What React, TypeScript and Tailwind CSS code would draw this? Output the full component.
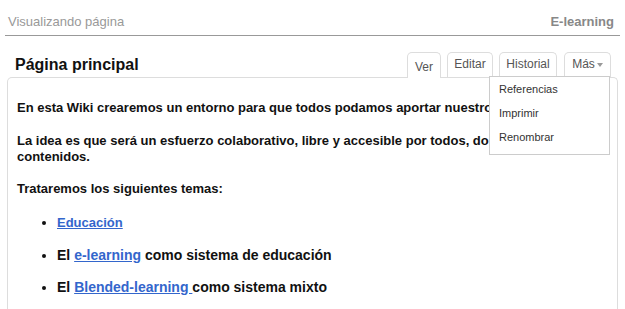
import React from 'react';

const tabs = [
  { label: 'Ver', width: 'w-[34px]', active: true },
  { label: 'Editar', width: 'w-[46px]', active: false },
  { label: 'Historial', width: 'w-[58px]', active: false },
];

const menuItems = ['Referencias', 'Imprimir', 'Renombrar'];

export default function App() {
  return (
    <div className="w-[625px] h-[309px] overflow-hidden bg-white font-['Liberation_Sans',Arial,sans-serif]">
      {/* page header */}
      <div className="mx-[5px] mt-[14px] flex items-center justify-between border-b border-[#999] pb-[5px] pl-[3px] pr-[6px] text-[13px] leading-[16px]">
        <span className="text-[#999]">Visualizando página</span>
        <span className="font-bold text-[#888]">E-learning</span>
      </div>

      {/* title + tabs */}
      <div className="mt-[16px] flex h-[25px] items-start justify-between">
        <h2 className="ml-[15px] mt-[3px] text-[16px] font-bold leading-[20px] text-[#111]">Página principal</h2>
        <ul className="mr-[14px] flex items-start gap-[6px] text-[12px] leading-[14px] text-[#555]">
          {tabs.map(t =>
            t.active ? (
              <li
                key={t.label}
                className={`relative z-10 h-[26px] ${t.width} rounded-t-[5px] border border-b-0 border-[#ddd] bg-white pt-[7px] text-center`}
              >
                {t.label}
              </li>
            ) : (
              <li
                key={t.label}
                className={`h-[25px] ${t.width} rounded-t-[5px] border border-b-0 border-[#ddd] bg-white pt-[4px] text-center`}
              >
                {t.label}
              </li>
            )
          )}
          <li className="relative ml-[1px] h-[25px] w-[47px] rounded-t-[5px] border border-b-0 border-[#ddd] bg-white pt-[4px] text-center">
            Más
            <span className="ml-[2px] inline-block h-0 w-0 border-x-[3px] border-t-[4px] border-x-transparent border-t-[#999] align-middle" />
            <div className="absolute right-0 top-[23px] z-20 w-[121px] border border-[#ccc] bg-white pb-[5px] text-left text-[11px] leading-[24px] text-[#333]">
              {menuItems.map(m => (
                <div key={m} className="pl-[9px]">{m}</div>
              ))}
            </div>
          </li>
        </ul>
      </div>

      {/* content panel */}
      <div className="ml-[7px] h-[240px] w-[611px] overflow-hidden rounded-t-[5px] border border-b-0 border-[#ddd] pl-[9px] pt-[22px] text-[13px] font-bold leading-[16px] text-[#111]">
        <p className="whitespace-nowrap">
          En esta Wiki crearemos un entorno para que todos podamos aportar nuestros conocimientos.
        </p>
        <p className="mt-[17px]">
          La idea es que será un esfuerzo colaborativo, libre y accesible por todos, donde compartir
          <br />
          contenidos.
        </p>
        <p className="mt-[16px]">Trataremos los siguientes temas:</p>
        <ul className="mt-[18px] list-disc pl-[40px]">
          <li>
            <a href="#" className="text-[#3366cc] underline">Educación</a>
          </li>
          <li className="mt-[16px] text-[14px]">
            El <a href="#" className="text-[#3366cc] underline">e-learning</a> como sistema de educación
          </li>
          <li className="mt-[16px] text-[14px]">
            El <a href="#" className="text-[#3366cc] underline">Blended-learning </a>como sistema mixto
          </li>
        </ul>
      </div>
    </div>
  );
}
